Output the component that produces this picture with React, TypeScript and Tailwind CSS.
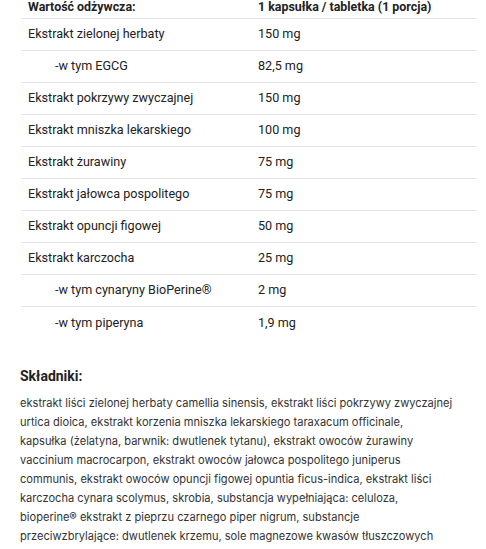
import React from 'react';

interface Row {
  name: string;
  value: string;
  sub?: boolean;
}

const rows: Row[] = [
  { name: 'Ekstrakt zielonej herbaty', value: '150 mg' },
  { name: '-w tym EGCG', value: '82,5 mg', sub: true },
  { name: 'Ekstrakt pokrzywy zwyczajnej', value: '150 mg' },
  { name: 'Ekstrakt mniszka lekarskiego', value: '100 mg' },
  { name: 'Ekstrakt żurawiny', value: '75 mg' },
  { name: 'Ekstrakt jałowca pospolitego', value: '75 mg' },
  { name: 'Ekstrakt opuncji figowej', value: '50 mg' },
  { name: 'Ekstrakt karczocha', value: '25 mg' },
  { name: '-w tym cynaryny BioPerine®', value: '2 mg', sub: true },
  { name: '-w tym piperyna', value: '1,9 mg', sub: true },
];

// linie tekstu składu, łamane jak w oryginalnej aukcji
const ingredientLines = [
  'ekstrakt liści zielonej herbaty camellia sinensis, ekstrakt liści pokrzywy zwyczajnej',
  'urtica dioica, ekstrakt korzenia mniszka lekarskiego taraxacum officinale,',
  'kapsułka (żelatyna, barwnik: dwutlenek tytanu), ekstrakt owoców żurawiny',
  'vaccinium macrocarpon, ekstrakt owoców jałowca pospolitego juniperus',
  'communis, ekstrakt owoców opuncji figowej opuntia ficus-indica, ekstrakt liści',
  'karczocha cynara scolymus, skrobia, substancja wypełniająca: celuloza,',
  'bioperine® ekstrakt z pieprzu czarnego piper nigrum, substancje',
  'przeciwzbrylające: dwutlenek krzemu, sole magnezowe kwasów tłuszczowych',
];

const App: React.FC = () => {
  return (
    <div className="w-[486px] h-[549px] overflow-hidden bg-white text-[#222] font-['Roboto',sans-serif]">
      {/* Tabela wartości odżywczych */}
      <div className="-mt-[13px] ml-[21px] w-[456px] text-[12.6px]">
        <div className="flex h-[32px] items-center border-b border-[#e6e6e6] pt-[10px] font-bold text-[12.4px]">
          <span className="w-[237px] pl-[7px]">Wartość odżywcza:</span>
          <span>1 kapsułka / tabletka (1 porcja)</span>
        </div>
        {rows.map((row, i) => (
          <div
            key={row.name}
            className={`flex h-[32px] items-center ${i < rows.length - 1 ? 'border-b border-[#e6e6e6]' : ''}`}
          >
            <span className={`w-[237px] ${row.sub ? 'pl-[34px]' : 'pl-[7px]'}`}>{row.name}</span>
            <span>{row.value}</span>
          </div>
        ))}
      </div>

      {/* Składniki */}
      <div className="pl-[20px] pr-[8px] pt-[28px]">
        <h3 className="text-[14px] font-bold leading-[19px]">Składniki:</h3>
        <p className="mt-[8px] font-['Inter',sans-serif] text-[11.1px] leading-[19px] text-[#333]">
          {ingredientLines.map(line => (
            <span key={line} className="block whitespace-nowrap">{line}</span>
          ))}
        </p>
      </div>
    </div>
  );
};

export default App;
